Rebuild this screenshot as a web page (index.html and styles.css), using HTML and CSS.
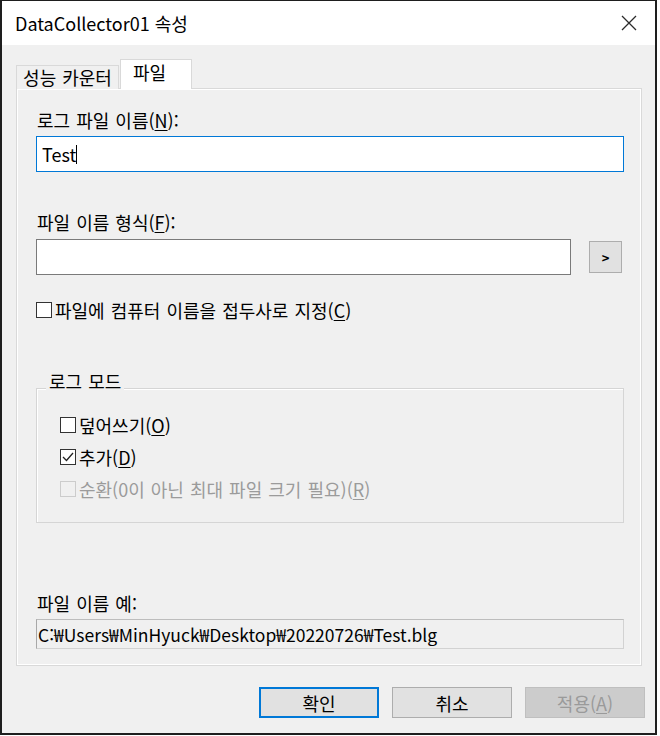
FILE: index.html
```html
<!DOCTYPE html>
<html lang="ko">
<head>
    <meta charset="UTF-8">
    <title>DataCollector01 속성</title>
    <link rel="stylesheet" href="styles.css">
</head>
<body>
    <div class="window">
        <!-- 제목 표시줄 -->
        <div class="titlebar">
            <span class="title">DataCollector01 속성</span>
            <svg class="close" width="16" height="16" viewBox="0 0 16 16">
                <path d="M1 1 L15 15 M15 1 L1 15" stroke="#2b2b2b" stroke-width="1.3" fill="none"/>
            </svg>
        </div>

        <div class="content">
            <!-- 탭 -->
            <div class="tabs">
                <div class="tab">성능 카운터</div>
                <div class="tab active">파일</div>
            </div>

            <div class="panel">
                <div class="label">로그 파일 이름(<u>N</u>):</div>
                <div class="textbox focused">Test<span class="caret"></span></div>

                <div class="label label-second">파일 이름 형식(<u>F</u>):</div>
                <div class="input-row">
                    <div class="textbox plain"></div>
                    <div class="small-btn">&gt;</div>
                </div>

                <div class="check-row prefix">
                    <span class="check"></span>
                    <span>파일에 컴퓨터 이름을 접두사로 지정(<u>C</u>)</span>
                </div>

                <!-- 로그 모드 그룹 -->
                <div class="group">
                    <span class="legend">로그 모드</span>
                    <div class="check-row">
                        <span class="check"></span>
                        <span>덮어쓰기(<u>O</u>)</span>
                    </div>
                    <div class="check-row">
                        <span class="check">
                            <svg width="14" height="14" viewBox="0 0 14 14">
                                <path d="M2 7 L5.5 10.5 L12 3" stroke="#222" stroke-width="1.3" fill="none"/>
                            </svg>
                        </span>
                        <span>추가(<u>D</u>)</span>
                    </div>
                    <div class="check-row disabled">
                        <span class="check"></span>
                        <span>순환(0이 아닌 최대 파일 크기 필요)(<u>R</u>)</span>
                    </div>
                </div>

                <div class="label label-example">파일 이름 예:</div>
                <div class="readonly">C:₩Users₩MinHyuck₩Desktop₩20220726₩Test.blg</div>
            </div>

            <!-- 하단 버튼 -->
            <div class="buttons">
                <button class="btn default">확인</button>
                <button class="btn">취소</button>
                <button class="btn disabled">적용(<u>A</u>)</button>
            </div>
        </div>
    </div>
</body>
</html>
```

FILE: styles.css
```css
/* 속성 대화 상자 */
body {
    margin: 0;
    background: #fff;
    font-family: "Noto Sans CJK KR", "Noto Sans", sans-serif;
    font-size: 18px;
    word-spacing: 1px;
    color: #000;
}

.window {
    width: 653px;
    height: 732px;
    border: 2px solid #1e1e1e;
    border-top-width: 1px;
    background: #f0f0f0;
    display: flex;
    flex-direction: column;
}

/* 제목 표시줄 */
.titlebar {
    height: 44px;
    background: #fff;
    display: flex;
    align-items: center;
    justify-content: space-between;
    padding: 0 18px 0 13px;
}

.title {
    font-size: 18px;
    word-spacing: 0;
}

.close {
    display: block;
}

.content {
    padding: 14px 0 0 14px;
}

/* 탭 */
.tabs {
    display: flex;
    align-items: flex-end;
    height: 30px;
    margin-bottom: -1px;
    position: relative;
    z-index: 1;
}

.tab {
    width: 103px;
    height: 24px;
    line-height: 22px;
    text-align: center;
    border: 1px solid #d9d9d9;
    border-bottom: none;
    box-sizing: border-box;
    background: #f0f0f0;
}

.tab.active {
    width: 72px;
    height: 30px;
    padding-left: 12px;
    text-align: left;
    background: #fff;
    margin-left: 1px;
    line-height: 24px;
}

.panel {
    width: 626px;
    height: 578px;
    box-sizing: border-box;
    border: 1px solid #d9d9d9;
    box-shadow: inset 1px 1px 0 #fff, inset -1px -1px 0 #fff;
    padding: 21px 17px 0 19px;
    display: flex;
    flex-direction: column;
}

.label {
    line-height: 20px;
    padding-left: 1px;
}

.label-second {
    margin-top: 40px;
}

.label-example {
    margin-top: 70px;
}

u {
    text-underline-offset: 2px;
}

/* 입력 상자 */
.textbox {
    height: 36px;
    box-sizing: border-box;
    background: #fff;
    border: 1px solid #7a7a7a;
    padding-left: 5px;
    display: flex;
    align-items: center;
}

.textbox.focused {
    margin-top: 6px;
    border-color: #0078d7;
}

.caret {
    width: 1px;
    height: 19px;
    background: #000;
}

.input-row {
    display: flex;
    align-items: center;
    margin-top: 7px;
}

.input-row .textbox {
    flex: 1;
}

.small-btn {
    width: 33px;
    height: 32px;
    box-sizing: border-box;
    margin: 0 2px 0 18px;
    background: #e1e1e1;
    border: 1px solid #adadad;
    display: flex;
    align-items: center;
    justify-content: center;
    font-size: 13px;
    font-weight: bold;
}

/* 체크 상자 */
.check-row {
    display: flex;
    align-items: center;
    height: 20px;
}

.check-row.prefix {
    margin-top: 25px;
}

.check {
    width: 16px;
    height: 16px;
    box-sizing: border-box;
    border: 1px solid #333;
    background: #fff;
    margin-right: 3px;
    display: flex;
    align-items: center;
    justify-content: center;
}

.check-row.disabled {
    color: #9b9b9b;
}

.check-row.disabled .check {
    border-color: #cccccc;
    background: #f0f0f0;
}

/* 그룹 상자 */
.group {
    position: relative;
    margin-top: 68px;
    height: 135px;
    box-sizing: border-box;
    border: 1px solid #d5d5d5;
    box-shadow: inset 1px 1px 0 #fff;
    padding: 26px 0 0 23px;
    display: flex;
    flex-direction: column;
    gap: 12px;
}

.legend {
    position: absolute;
    left: 9px;
    top: -18px;
    padding: 0 3px;
    line-height: 20px;
    background: #f0f0f0;
}

.readonly {
    margin-top: 6px;
    height: 30px;
    box-sizing: border-box;
    border: 1px solid #d2d2d2;
    border-left-color: #a8a8a8;
    border-top-color: #bdbdbd;
    padding-left: 1px;
    display: flex;
    align-items: center;
    font-size: 17.5px;
}

/* 하단 버튼 */
.buttons {
    display: flex;
    justify-content: flex-end;
    gap: 13px;
    padding-right: 10px;
    margin-top: 21px;
}

.btn {
    width: 120px;
    height: 31px;
    background: #e1e1e1;
    border: 1px solid #adadad;
    font-family: inherit;
    font-size: 18px;
    color: #000;
    padding: 0;
}

.btn.default {
    border: 2px solid #0078d7;
}

.btn.disabled {
    background: #cccccc;
    border-color: #bfbfbf;
    color: #9a9a9a;
}
```
